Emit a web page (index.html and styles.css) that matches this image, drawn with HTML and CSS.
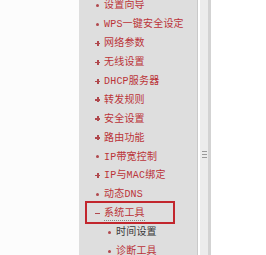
FILE: index.html
```html
<!DOCTYPE html>
<html lang="zh">
<head>
<meta charset="utf-8">
<link rel="stylesheet" href="styles.css">
</head>
<body>
<div class="frame">
  <div class="gutter"></div>
  <nav class="panel">
    <ul class="menu">
      <li class="item"><span class="dot"></span><span class="label">设置向导</span></li>
      <li class="item"><span class="dot"></span><span class="label">WPS一键安全设定</span></li>
      <li class="item"><span class="plus"></span><span class="label">网络参数</span></li>
      <li class="item"><span class="plus"></span><span class="label">无线设置</span></li>
      <li class="item"><span class="plus"></span><span class="label">DHCP服务器</span></li>
      <li class="item"><span class="plus"></span><span class="label">转发规则</span></li>
      <li class="item"><span class="plus"></span><span class="label">安全设置</span></li>
      <li class="item"><span class="plus"></span><span class="label">路由功能</span></li>
      <li class="item"><span class="dot"></span><span class="label">IP带宽控制</span></li>
      <li class="item"><span class="plus"></span><span class="label">IP与MAC绑定</span></li>
      <li class="item"><span class="dot"></span><span class="label">动态DNS</span></li>
      <li class="item open"><span class="minus"></span><span class="label focus">系统工具</span></li>
      <li class="item sub"><span class="dot"></span><span class="label dark">时间设置</span></li>
      <li class="item sub"><span class="dot"></span><span class="label">诊断工具</span></li>
    </ul>
  </nav>
  <div class="scrollbar">
    <div class="track">
      <div class="grip"><i></i><i></i><i></i></div>
    </div>
  </div>
  <div class="rest"></div>
</div>
</body>
</html>
```
FILE: styles.css
```css
html, body {
  margin: 0;
  padding: 0;
  background: #ffffff;
  width: 266px;
  height: 255px;
  overflow: hidden;
}
.frame {
  display: flex;
  height: 255px;
}
.gutter {
  width: 79px;
  background: #fcfcfc;
}
.panel {
  width: 118px;
  background: #dedede;
  border-right: 1px solid #c9c9c9;
  overflow: hidden;
}
.menu {
  list-style: none;
  margin: -5px 0 0 0;
  padding: 0;
  font-family: "Liberation Mono", "Noto Sans CJK SC", monospace;
  font-size: 10px;
  color: #bb3338;
}
.item {
  position: relative;
  display: flex;
  align-items: center;
  height: 18.9px;
  padding-left: 15px;
  white-space: nowrap;
}
.item.sub {
  padding-left: 27px;
}
.dot, .plus, .minus {
  width: 9px;
  margin-right: 1px;
  flex: none;
  position: relative;
  height: 9px;
}
.dot::before {
  content: "";
  position: absolute;
  left: 2px;
  top: 4px;
  width: 3px;
  height: 3px;
  border-radius: 50%;
  background: #b0484d;
}
.plus::before, .plus::after, .minus::before {
  content: "";
  position: absolute;
  background: #b0484d;
}
.plus::before, .minus::before {
  left: 1px;
  top: 5px;
  width: 5px;
  height: 1.5px;
}
.plus::after {
  left: 3px;
  top: 3px;
  width: 1.5px;
  height: 5px;
}
.label {
  line-height: 14px;
  padding-top: 4px;
  letter-spacing: 0.2px;
}
.label.dark {
  color: #3a3a3a;
}
.label.focus {
  border-bottom: 1px dotted #888;
  line-height: 13px;
}
.open::after {
  content: "";
  position: absolute;
  left: 6px;
  top: -2px;
  width: 86px;
  height: 19px;
  border: 2px solid #c2262d;
}
.scrollbar {
  width: 14px;
  background: #ffffff;
  display: flex;
  padding-left: 2px;
}
.track {
  width: 8px;
  background: #ececec;
  border-right: 3px solid #d3d3d3;
  display: flex;
  flex-direction: column;
  align-items: center;
  padding-top: 151px;
}
.grip {
  display: flex;
  flex-direction: column;
  gap: 2px;
}
.grip i {
  display: block;
  width: 5px;
  height: 1px;
  background: #9a9a9a;
}
.rest {
  flex: 1;
  background: #ffffff;
}
```
